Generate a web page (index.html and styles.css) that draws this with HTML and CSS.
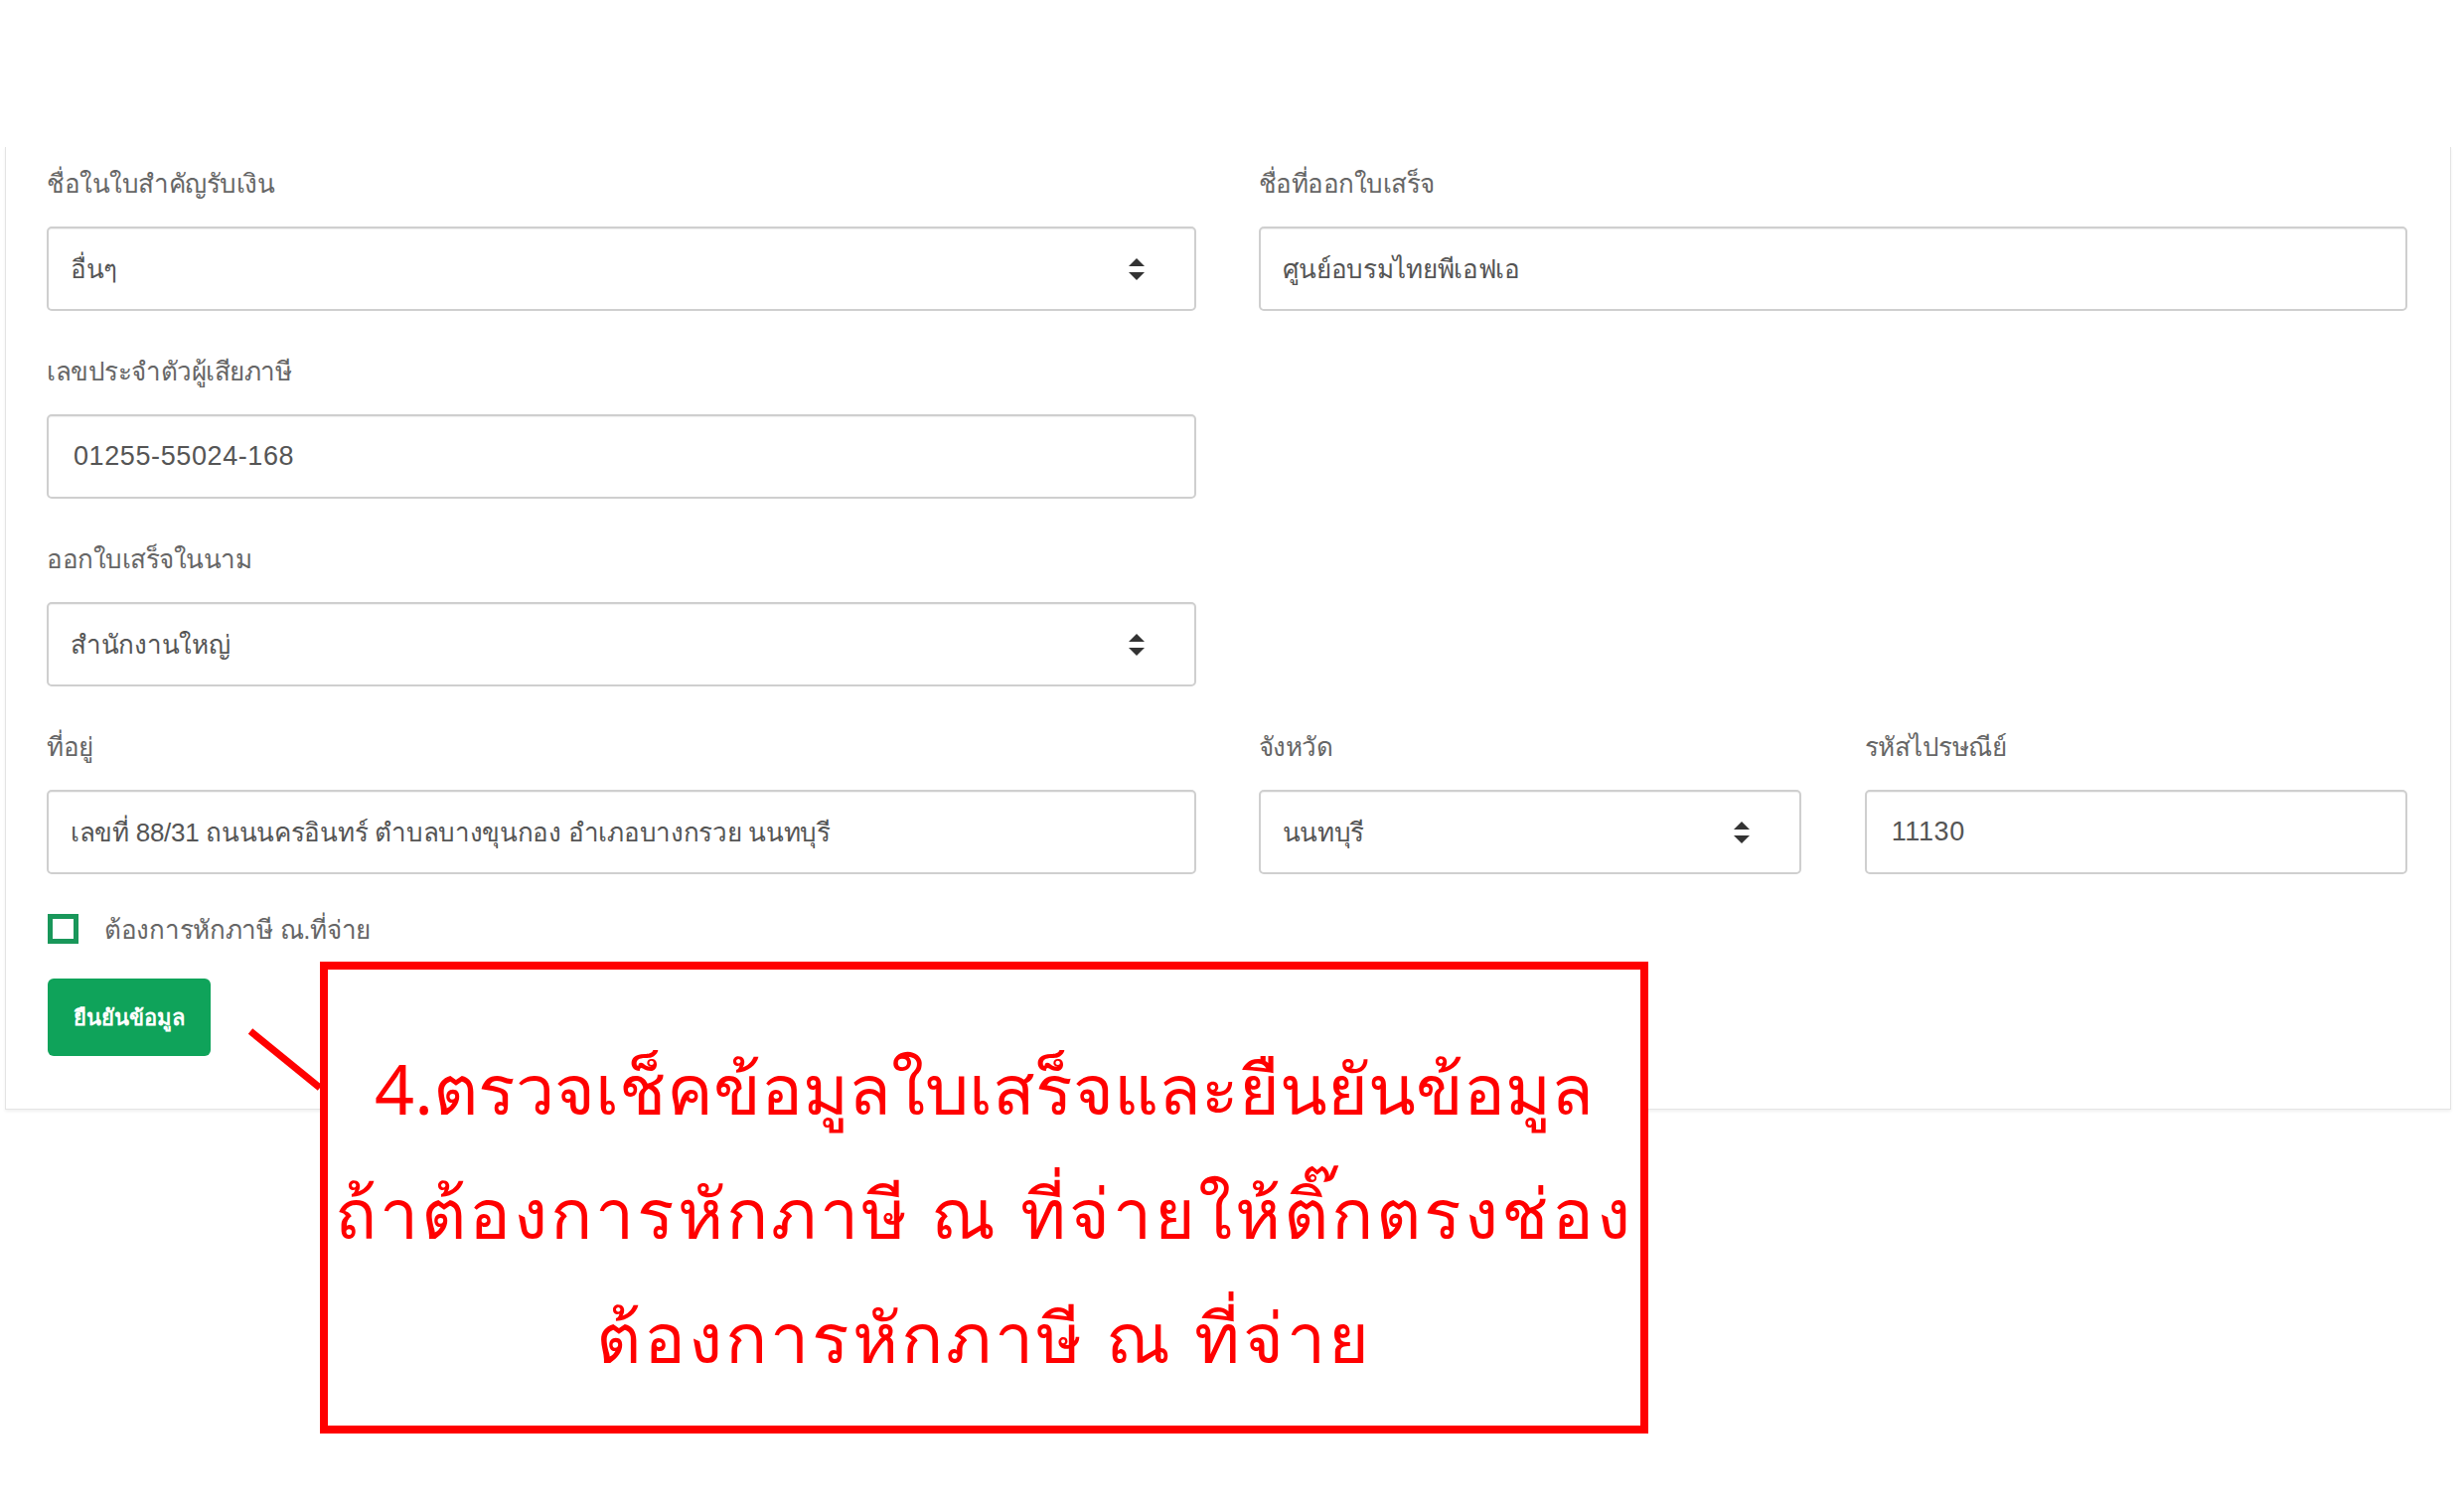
FILE: index.html
```html
<!DOCTYPE html>
<html lang="th">
<head>
<meta charset="utf-8">
<title>ข้อมูลใบเสร็จ</title>
<link rel="stylesheet" href="styles.css">
</head>
<body>
<div class="page">
  <div class="card">
    <div class="grid">
      <div class="field">
        <label class="label">ชื่อในใบสำคัญรับเงิน</label>
        <div class="control select"><span>อื่นๆ</span><span class="arrows"></span></div>
      </div>
      <div class="field">
        <label class="label">ชื่อที่ออกใบเสร็จ</label>
        <div class="control"><span>ศูนย์อบรมไทยพีเอฟเอ</span></div>
      </div>
      <div class="field">
        <label class="label">เลขประจำตัวผู้เสียภาษี</label>
        <div class="control num"><span>01255-55024-168</span></div>
      </div>
      <div class="field empty"></div>
      <div class="field">
        <label class="label">ออกใบเสร็จในนาม</label>
        <div class="control select"><span>สำนักงานใหญ่</span><span class="arrows"></span></div>
      </div>
      <div class="field empty"></div>
      <div class="field">
        <label class="label">ที่อยู่</label>
        <div class="control"><span>เลขที่ 88/31 ถนนนครอินทร์ ตำบลบางขุนกอง อำเภอบางกรวย นนทบุรี</span></div>
      </div>
      <div class="subgrid">
        <div class="field">
          <label class="label">จังหวัด</label>
          <div class="control select"><span>นนทบุรี</span><span class="arrows"></span></div>
        </div>
        <div class="field">
          <label class="label">รหัสไปรษณีย์</label>
          <div class="control num"><span>11130</span></div>
        </div>
      </div>
    </div>
    <div class="check-row">
      <span class="checkbox"></span>
      <span class="check-label">ต้องการหักภาษี ณ.ที่จ่าย</span>
    </div>
    <button class="btn">ยืนยันข้อมูล</button>
  </div>

  <svg class="pointer" width="90" height="70" viewBox="0 0 90 70">
    <line x1="4" y1="3" x2="74" y2="60" stroke="#ff0000" stroke-width="7"/>
  </svg>
  <div class="callout">
    <p>4.ตรวจเช็คข้อมูลใบเสร็จและยืนยันข้อมูล</p>
    <p class="wide">ถ้าต้องการหักภาษี ณ ที่จ่ายให้ติ๊กตรงช่อง</p>
    <p class="wide">ต้องการหักภาษี ณ ที่จ่าย</p>
  </div>
</div>
</body>
</html>
```

FILE: styles.css
```css
* { box-sizing: border-box; }
html, body {
  margin: 0;
  padding: 0;
  background: #ffffff;
}
body {
  width: 2480px;
  height: 1521px;
  overflow: hidden;
  font-family: "Liberation Sans", "Noto Sans", sans-serif;
  color: #555555;
}
.page {
  position: relative;
  padding: 148px 13px 0 5px;
}
.card {
  background: #fff;
  border: 1px solid #e4e4e4;
  border-top: none;
  box-shadow: 0 2px 3px rgba(0,0,0,0.06);
  padding: 17px 43px 53px 41px;
}
.grid {
  display: grid;
  grid-template-columns: 1fr 1fr;
  column-gap: 63px;
}
.subgrid {
  display: grid;
  grid-template-columns: 1fr 1fr;
  column-gap: 64px;
}
.field {
  margin-bottom: 41px;
}
.label {
  display: block;
  height: 40px;
  line-height: 40px;
  font-size: 26px;
  color: #666666;
  margin-bottom: 23px;
  letter-spacing: -0.5px;
}
.control {
  height: 85px;
  border: 2px solid #cfcfcf;
  border-radius: 5px;
  box-shadow: inset 0 1px 1px rgba(0,0,0,0.06);
  display: flex;
  align-items: center;
  padding: 0 22px;
  font-size: 26px;
  color: #555555;
  letter-spacing: -0.3px;
  justify-content: space-between;
}
.control.num {
  padding-left: 25px;
  font-size: 27px;
  letter-spacing: 0.6px;
}
.arrows {
  width: 16px;
  height: 22px;
  margin-right: 28px;
  position: relative;
}
.arrows::before, .arrows::after {
  content: "";
  position: absolute;
  left: 0;
  border-left: 8px solid transparent;
  border-right: 8px solid transparent;
}
.arrows::before {
  top: 0;
  border-bottom: 8px solid #333;
}
.arrows::after {
  bottom: 0;
  border-top: 8px solid #333;
}
.check-row {
  display: flex;
  align-items: center;
  height: 30px;
  margin-top: -1px;
}
.checkbox {
  width: 31px;
  height: 30px;
  border: 5px solid #19975a;
  background: #fff;
  margin-left: 1px;
}
.check-label {
  margin-left: 26px;
  font-size: 26px;
  color: #666666;
  letter-spacing: -0.3px;
}
.btn {
  display: block;
  margin-top: 35px;
  margin-left: 1px;
  width: 164px;
  height: 78px;
  border: none;
  border-radius: 6px;
  background: #0fa35a;
  color: #ffffff;
  font-family: "Liberation Sans", "Noto Sans", sans-serif;
  font-size: 22px;
  font-weight: bold;
  padding: 0;
}
.pointer {
  position: absolute;
  left: 248px;
  top: 1035px;
}
.callout {
  position: absolute;
  left: 322px;
  top: 968px;
  width: 1337px;
  height: 475px;
  border: 8px solid #ff0000;
  background: #ffffff;
  padding-top: 57px;
  text-align: center;
  color: #ff0000;
  font-family: "Noto Sans", sans-serif;
  font-size: 70px;
}
.callout p {
  margin: 0;
  height: 125px;
  line-height: 125px;
  white-space: nowrap;
}
.callout p.wide {
  letter-spacing: 3px;
}
```
